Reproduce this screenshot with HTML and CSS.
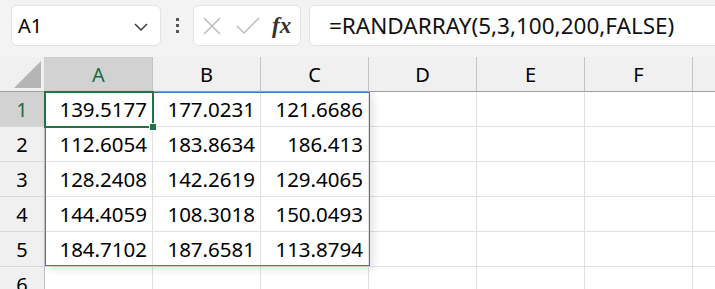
FILE: index.html
```html
<!DOCTYPE html>
<html lang="ja">
<head>
  <meta charset="UTF-8">
  <title>RANDARRAY</title>
  <link rel="stylesheet" href="styles.css">
</head>
<body>
  <div class="toolbar">
    <div class="namebox">
      <span>A1</span>
      <svg class="chevron" width="14" height="8" viewBox="0 0 14 8"><path d="M1 1 L7 7 L13 1" fill="none" stroke="#333" stroke-width="1.4"/></svg>
    </div>
    <div class="grip"><span></span><span></span><span></span></div>
    <div class="fbuttons">
      <svg width="20" height="20" viewBox="0 0 20 20"><path d="M2 2 L18 18 M18 2 L2 18" stroke="#bdbdbd" stroke-width="1.5"/></svg>
      <svg width="24" height="18" viewBox="0 0 24 18"><path d="M1 9 L8 16 L23 1" fill="none" stroke="#bdbdbd" stroke-width="1.5"/></svg>
      <span class="fx">fx</span>
    </div>
    <div class="formula">=RANDARRAY(5,3,100,200,FALSE)</div>
  </div>

  <div class="sheet">
    <div class="corner"><span></span></div>
    <div class="colhead active">A</div>
    <div class="colhead">B</div>
    <div class="colhead">C</div>
    <div class="colhead">D</div>
    <div class="colhead">E</div>
    <div class="colhead">F</div>
    <div class="colhead"></div>

    <div class="rowhead active">1</div>
    <div class="cell">139.5177</div><div class="cell">177.0231</div><div class="cell">121.6686</div>
    <div class="cell"></div><div class="cell"></div><div class="cell"></div><div class="cell"></div>

    <div class="rowhead">2</div>
    <div class="cell">112.6054</div><div class="cell">183.8634</div><div class="cell">186.413</div>
    <div class="cell"></div><div class="cell"></div><div class="cell"></div><div class="cell"></div>

    <div class="rowhead">3</div>
    <div class="cell">128.2408</div><div class="cell">142.2619</div><div class="cell">129.4065</div>
    <div class="cell"></div><div class="cell"></div><div class="cell"></div><div class="cell"></div>

    <div class="rowhead">4</div>
    <div class="cell">144.4059</div><div class="cell">108.3018</div><div class="cell">150.0493</div>
    <div class="cell"></div><div class="cell"></div><div class="cell"></div><div class="cell"></div>

    <div class="rowhead">5</div>
    <div class="cell">184.7102</div><div class="cell">187.6581</div><div class="cell">113.8794</div>
    <div class="cell"></div><div class="cell"></div><div class="cell"></div><div class="cell"></div>

    <div class="rowhead">6</div>
    <div class="cell"></div><div class="cell"></div><div class="cell"></div>
    <div class="cell"></div><div class="cell"></div><div class="cell"></div><div class="cell"></div>

    <div class="spill"></div>
    <div class="selection"><span class="handle"></span></div>
  </div>
</body>
</html>
```

FILE: styles.css
```css
* {
  box-sizing: border-box;
}

body {
  margin: 0;
  width: 715px;
  height: 289px;
  overflow: hidden;
  background: #fff;
  font-family: "Noto Sans", "Noto Sans CJK JP", sans-serif;
  color: #000;
}

.toolbar {
  display: flex;
  align-items: center;
  height: 57px;
  padding: 0 0 6px 11px;
  background: #f3f3f3;
}

.toolbar > * {
  flex-shrink: 0;
}

.namebox,
.fbuttons,
.formula {
  height: 41px;
  background: #fff;
  border: 1px solid #e3e3e3;
  border-radius: 6px;
}

.namebox {
  width: 150px;
  display: flex;
  align-items: center;
  justify-content: space-between;
  padding: 0 12px 0 6px;
  font-size: 20px;
}

.chevron {
  margin-top: 2px;
}

.grip {
  width: 32px;
  display: flex;
  flex-direction: column;
  align-items: center;
  gap: 3px;
}

.grip span {
  width: 3px;
  height: 3px;
  background: #555;
}

.fbuttons {
  width: 108px;
  display: flex;
  align-items: center;
  padding: 0 6px 0 8px;
  gap: 14px;
}

.fx {
  font-family: "Liberation Serif", serif;
  font-style: italic;
  font-weight: bold;
  font-size: 23px;
  color: #333;
  margin-left: -2px;
}

.formula {
  width: 430px;
  margin-left: 8px;
  padding-left: 19px;
  display: flex;
  align-items: center;
  font-size: 22.5px;
  color: #111;
}

.sheet {
  position: relative;
  display: grid;
  grid-template-columns: 45px repeat(7, 108px);
  grid-auto-rows: 35px;
}

.corner,
.colhead,
.rowhead {
  background: #f0f0f0;
  display: flex;
  align-items: center;
  justify-content: center;
  font-size: 20px;
}

.corner {
  align-items: flex-end;
  justify-content: flex-end;
  padding: 0 3px 3px 0;
  border-right: 1px solid #d0d0d0;
  border-bottom: 1px solid #9f9f9f;
}

.corner span {
  width: 27px;
  height: 27px;
  background: #b5b5b5;
  clip-path: polygon(100% 0, 100% 100%, 0 100%);
}

.colhead {
  border-right: 1px solid #c3c3c3;
  border-bottom: 1px solid #9f9f9f;
}

.rowhead {
  border-right: 1px solid #c3c3c3;
  border-bottom: 1px solid #d8d8d8;
}

.colhead.active,
.rowhead.active {
  background: #d2d2d2;
  color: #1d6b40;
}

.cell {
  border-right: 1px solid #e1e1e1;
  border-bottom: 1px solid #e1e1e1;
  display: flex;
  align-items: center;
  justify-content: flex-end;
  padding-right: 5px;
  font-size: 20.5px;
}

.spill {
  position: absolute;
  left: 45px;
  top: 35px;
  width: 325px;
  height: 174px;
  border: 1px solid #4472c4;
  box-shadow: 3px 3px 8px rgba(0, 0, 0, 0.12);
  pointer-events: none;
}

.selection {
  position: absolute;
  left: 44px;
  top: 34px;
  width: 110px;
  height: 37px;
  border: 2px solid #217346;
}

.handle {
  position: absolute;
  right: -5px;
  bottom: -5px;
  width: 8px;
  height: 8px;
  background: #217346;
  border: 1px solid #fff;
}
```
